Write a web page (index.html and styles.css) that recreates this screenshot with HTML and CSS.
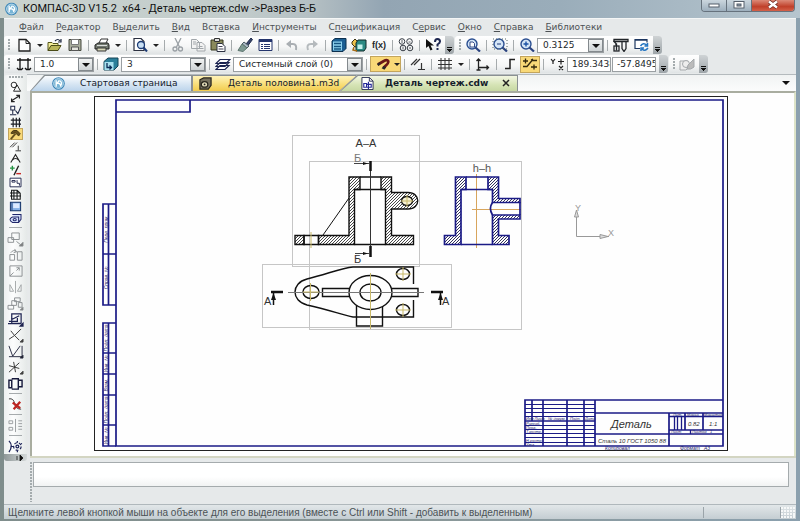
FILE: index.html
```html
<!DOCTYPE html>
<html lang="ru">
<head>
<meta charset="utf-8">
<title>КОМПАС-3D V15.2 x64 - Деталь чертеж.cdw</title>
<meta name="viewport" content="width=device-width, initial-scale=1">
<link rel="stylesheet" href="styles.css">
</head>
<body>
<div class="window">
  <header class="titlebar">
    <svg class="logo" viewBox="0 0 16 14" aria-hidden="true"><use href="#i-kompas"/></svg>
    <h1>КОМПАС-3D V15.2 &nbsp;x64 - Деталь чертеж.cdw -&gt;Разрез Б-Б</h1>
    <div class="caption">
      <button class="cap" aria-label="Свернуть"><svg viewBox="0 0 24 11"><rect x="7" y="4" width="10" height="3" fill="#fff" stroke="#555f6b"/></svg></button>
      <button class="cap" aria-label="Восстановить"><svg viewBox="0 0 24 11"><rect x="7" y="1.500" width="10" height="6.500" fill="#fff" stroke="#555f6b"/><rect x="10" y="4" width="4" height="2" fill="#8b99a8" stroke="#555f6b"/></svg></button>
      <button class="cap cap-close" aria-label="Закрыть"><svg viewBox="0 0 40 11"><path d="M16 1.500l8 6m0-6l-8 6" stroke="#6b2a22" stroke-width="4"/><path d="M16 1.500l8 6m0-6l-8 6" stroke="#fff" stroke-width="2.400"/></svg></button>
    </div>
  </header>

  <div class="frame">
    <nav class="menu" aria-label="Главное меню">
      <a href="#"><u>Ф</u>айл</a>
      <a href="#"><u>Р</u>едактор</a>
      <a href="#">В<u>ы</u>делить</a>
      <a href="#"><u>В</u>ид</a>
      <a href="#">Вст<u>а</u>вка</a>
      <a href="#"><u>И</u>нструменты</a>
      <a href="#">С<u>п</u>ецификация</a>
      <a href="#">С<u>е</u>рвис</a>
      <a href="#"><u>О</u>кно</a>
      <a href="#"><u>С</u>правка</a>
      <a href="#"><u>Б</u>иблиотеки</a>
    </nav>

    <div class="toolbars">
      <div class="toolbar">
        <i class="grip"></i>
        <button class="tool" aria-label="Создать"><svg viewBox="0 0 16 14"><path d="M3 1.500h7l4 4v7.500h-11z" fill="#fff" stroke="#222" stroke-width="1.300"/><path d="M10 1.500v4h4" fill="none" stroke="#222"/></svg></button>
        <button class="drop" aria-label="Варианты создания"></button>
        <button class="tool" aria-label="Открыть"><svg viewBox="0 0 16 14"><path d="M1 12.500v-8h4l1 1h5v2" fill="#f4ee9a" stroke="#55561a"/><path d="M1 12.500l3-5h10l-3 5z" fill="#b9b65a" stroke="#4a4b16"/><path d="M8 3q3-3 5 0m1-2v3h-3" fill="none" stroke="#1d2740" stroke-width="1.200"/></svg></button>
        <button class="tool" aria-label="Сохранить"><svg viewBox="0 0 16 14"><path d="M2 1.500h12v11h-12z" fill="#a9ad9c" stroke="#45493f"/><path d="M4.500 1.500h7v5h-7z" fill="#fff" stroke="#777"/><path d="M4.500 9h7v3.500h-7z" fill="#e5e5dd" stroke="#555"/></svg></button>
        <i class="sep"></i>
        <button class="tool" aria-label="Печать"><svg viewBox="0 0 16 14"><path d="M5 5l2-4h7l-2 4" fill="#fff" stroke="#333"/><path d="M1 7l3-2h10l1 2v4h-14z" fill="#737a70" stroke="#222"/><path d="M3 10h9v3h-9z" fill="#d8d8b8" stroke="#333"/><path d="M3 7.500h10" stroke="#ddd"/></svg></button>
        <button class="drop" aria-label="Параметры печати"></button>
        <i class="sep"></i>
        <button class="tool" aria-label="Предварительный просмотр"><svg viewBox="0 0 16 14"><path d="M2 .500h7l3 3v9h-10z" fill="#fff" stroke="#2b3040" stroke-width="1.200"/><circle cx="9" cy="7" r="3.500" fill="#c9e0f4" stroke="#1c3b75" stroke-width="1.300"/><path d="M11.500 9.500l3.500 4" stroke="#1c3b75" stroke-width="2"/></svg></button>
        <button class="drop" aria-label="Варианты просмотра"></button>
        <i class="sep"></i>
        <button class="tool" aria-label="Вырезать"><svg viewBox="0 0 16 14" fill="none" stroke="#9aa0a5" stroke-width="1.300"><path d="M5 0l4.500 9M11 0l-4.500 9"/><circle cx="5" cy="11" r="2"/><circle cx="10.500" cy="11" r="2"/></svg></button>
        <button class="tool" aria-label="Копировать"><svg viewBox="0 0 16 14" fill="#f2f2f2" stroke="#a1a6aa"><path d="M1.500 1.500h5l3 3v6h-8zM7 4.500h5l3 3v5.500h-8z"/><path d="M8.500 8.500h4m-4 2h5M3 4h3m-3 2h3"/></svg></button>
        <button class="tool" aria-label="Вставить"><svg viewBox="0 0 16 14"><path d="M1 2h12v10h-12z" fill="#8a8a5c" stroke="#35361f"/><path d="M4.500.500h5v3h-5z" fill="#ddd" stroke="#333"/><path d="M7 5.500h5l3 3v5h-8z" fill="#fff" stroke="#2b3040"/><path d="M8.500 8.500h4m-4 2.500h5" stroke="#445"/></svg></button>
        <i class="sep"></i>
        <button class="tool" aria-label="Копировать свойства"><svg viewBox="0 0 16 14"><path d="M9 6l5-6 1.500 1.500-4.500 6z" fill="#38456b" stroke="#202c4c"/><path d="M7 4l5 4-2 2-5-4z" fill="#a9b7c4" stroke="#4a5b62"/><path d="M5 6l5 4-4 3.500-5-1z" fill="#7e9a93" stroke="#5d766e"/></svg></button>
        <button class="tool" aria-label="Свойства"><svg viewBox="0 0 16 14"><path d="M2 1.500h13v11h-13z" fill="#fff" stroke="#24356d"/><path d="M2 1.500h13v2.500h-13z" fill="#24356d"/><path d="M4 6.500h2m1 0h6M4 8.500h2m1 0h6M4 10.500h2m1 0h6" stroke="#24356d" stroke-width="1.200"/></svg></button>
        <i class="sep"></i>
        <button class="tool" aria-label="Отменить"><svg viewBox="0 0 16 14"><path d="M3 6h6q4 0 3 6" fill="none" stroke="#aaafb3" stroke-width="2"/><path d="M7 2l-5 4 5 4z" fill="#aaafb3"/></svg></button>
        <button class="tool" aria-label="Повторить"><svg viewBox="0 0 16 14"><path d="M12 6h-5q-5 0-3 6" fill="none" stroke="#b5babd" stroke-width="2"/><path d="M9 2l5 4-5 4z" fill="#b5babd"/></svg></button>
        <i class="sep"></i>
        <button class="tool" aria-label="Менеджер документа"><svg viewBox="0 0 16 14"><path d="M1 3l3-2.500h11v10l-3 3h-11z" fill="#1b5e92" stroke="#0c304f"/><path d="M2 3.500h9v9h-9z" fill="#8fd2ee"/><path d="M3 5.500h7m-7 3h7m-7 2.500h7" stroke="#155480" stroke-width="1.300"/></svg></button>
        <button class="tool" aria-label="Библиотеки"><svg viewBox="0 0 16 14"><path d="M1 4l3-3 3 3v4l-3 1-3-3z" fill="#efc24a" stroke="#3d3413"/><path d="M5 5l2-3h8v8l-2 3h-8z" fill="#2c8a83" stroke="#102c2b"/><path d="M6.500 6.500h5v4.500h-5z" fill="#c6f0ea"/><path d="M3 9l-1 3 4 1" fill="none" stroke="#a86a12" stroke-width="1.500"/></svg></button>
        <button class="tool fx">f(x)</button>
        <i class="sep"></i>
        <button class="tool" aria-label="Параметры"><svg viewBox="0 0 16 14" fill="none" stroke="#353b43"><circle cx="4" cy="3.500" r="2.800"/><circle cx="11.500" cy="3.500" r="2.800"/><circle cx="5" cy="10" r="2.800"/><circle cx="12" cy="10" r="2.800"/><path d="M4 2v3m6.500-1h2M5 8.500v3m6-1.500h2" stroke-width=".800"/></svg></button>
        <i class="sep"></i>
        <button class="tool" aria-label="Справка"><svg viewBox="0 0 16 14"><path d="M1 1v9l2.500-2 2 4.500 2-1-2-4h3.500z" fill="#111"/><path d="M10 4q0-3 2.500-3t2.500 2.500q0 1.500-2.500 3v2" fill="none" stroke="#1e2750" stroke-width="2"/><path d="M11.500 10h2v2h-2z" fill="#1e2750"/></svg></button>
        <button class="more" aria-label="Ещё"></button>
      </div>
      <div class="toolbar">
        <i class="grip"></i>
        <button class="tool" aria-label="Показать всё"><svg viewBox="0 0 16 14"><use href="#i-lens"/><path d="M5 4h3l1.500 1.500v3.500h-4.500z" fill="#fff" stroke="#223a7a" stroke-width=".900"/></svg></button>
        <i class="sep"></i>
        <button class="tool" aria-label="Увеличить рамкой"><svg viewBox="0 0 16 14"><use href="#i-lens"/><path d="M1 1h14v10h-14z" fill="none" stroke="#566" stroke-dasharray="1 2"/><path d="M5 6h4" stroke="#223a7a"/></svg></button>
        <i class="sep"></i>
        <button class="tool" aria-label="Увеличить"><svg viewBox="0 0 16 14"><use href="#i-lens"/><path d="M4.500 6h5m-2.500-2.500v5" stroke="#1d52a5" stroke-width="1.400"/></svg></button>
        <span class="combo combo-scale"><select aria-label="Масштаб"><option>0.3125</option></select></span>
        <i class="sep"></i>
        <button class="tool" aria-label="Измерить"><svg viewBox="0 0 16 14" fill="none" stroke="#22262a" stroke-width="1.300"><path d="M1 3.500v-2h14v2h-14l2 2v2m10-4v7l-2 3-2-3v-7"/><rect x="1" y="8" width="5" height="5"/><path d="M3.500 5.500v7"/></svg></button>
        <button class="tool" aria-label="Обновить изображение"><svg viewBox="0 0 16 14"><path d="M7 10.500h-5v-9h12v3" fill="#fff" stroke="#1d3760" stroke-width="1.200"/><path d="M2 2h12" stroke="#1d3760" stroke-width="1.500"/><path d="M7.500 8q3-4 6-1m1-2v3h-3M15 10q-3 4-6 1m-1 2v-3h3" fill="none" stroke="#2475c2" stroke-width="1.500"/></svg></button>
        <button class="more" aria-label="Ещё"></button>
      </div>
    </div>

    <div class="toolbars">
      <div class="toolbar">
        <i class="grip"></i>
        <button class="tool" aria-label="Шаг курсора"><svg viewBox="0 0 16 14" fill="none" stroke="#111" stroke-width="1.300"><path d="M4 1v11m8-11v11M1 3h14M1 11l1.500 1.500h3L7 11M9 11l1.500 1.500h3L15 11"/></svg></button>
        <span class="combo combo-step"><select aria-label="Шаг курсора"><option>1.0</option></select></span>
        <i class="sep"></i>
        <button class="tool" aria-label="Состояния слоёв"><svg viewBox="0 0 16 14"><path d="M1 4.500l4-3.500h10v8l-4 4h-10z" fill="#2b7f9a" stroke="#154456"/><path d="M1.500 5h9v8h-9z" fill="#a8e0ee"/><path d="M4 6v4.500h4m-1.500-2l2 2-2 2" fill="none" stroke="#0c2a55" stroke-width="1.300"/></svg></button>
        <span class="combo combo-view"><select aria-label="Вид"><option>3</option></select></span>
        <i class="sep"></i>
        <button class="tool" aria-label="Слои"><svg viewBox="0 0 16 14" fill="#fff" stroke="#1b2350"><path d="M1 12.500l4-4h9l-4 4zM1 9.500l4-4h9l-4 4zM1 6.500l4-4h10l-4 4z" stroke-width="1.200"/></svg></button>
        <span class="combo combo-layer"><select aria-label="Слой"><option>Системный слой (0)</option></select></span>
        <i class="sep"></i>
        <button class="magnet" aria-label="Привязки"><svg viewBox="0 0 16 14"><path d="M2 7.500L8 4q4-2 5 0t-5 7" fill="none" stroke="#6b1717" stroke-width="3"/><path d="M1 7l3-2 1 2-2.500 2zM8 9l3 1.500-2 2.500-3-1.500z" fill="#28282b"/></svg><i class="tri"></i></button>
        <i class="sep"></i>
        <button class="tool" aria-label="Параллельность"><svg viewBox="0 0 16 14"><use href="#i-perp"/></svg></button>
        <i class="sep"></i>
        <button class="tool" aria-label="Сетка"><svg viewBox="0 0 16 14" fill="none" stroke="#333"><path d="M4 1v12M8 1v12M12 1v12M1 3.500h14M1 7.500h14M1 11h14"/></svg></button>
        <button class="drop" aria-label="Настройка сетки"></button>
        <i class="sep"></i>
        <button class="tool" aria-label="Локальная СК"><svg viewBox="0 0 16 14" fill="none" stroke="#222" stroke-width="1.300"><path d="M3.500 13v-11m-2 2l2-2 2 2M3.500 10.500h10m-2-2l2 2-2 2M1.500 13h4"/></svg></button>
        <i class="sep"></i>
        <button class="tool" aria-label="Ортогональное черчение"><svg viewBox="0 0 16 14" fill="none" stroke="#222" stroke-width="1.500"><path d="M3 11.500h5v-9h5"/></svg></button>
        <button class="tool active" aria-label="Округление"><svg viewBox="0 0 16 14" fill="none" stroke="#33290f" stroke-width="1.300"><path d="M1 4h5M3.500 1.500v5M1 9.500h4l5-6h5M9 10h6M12 7.500v5M9 3l2-1"/></svg></button>
        <i class="sep"></i>
        <button class="tool" aria-label="Координаты"><svg viewBox="0 0 16 14" fill="none" stroke="#222" stroke-width="1.200"><path d="M2 2l2 2.500 2-2.500M4 4.500v2.500M9 4.500h6M12 2v5.500M10 9l4 4m0-4l-4 4"/></svg></button>
        <input class="coord" aria-label="Координата X" value="189.3438">
        <input class="coord" aria-label="Координата Y" value="-57.8495">
        <button class="more" aria-label="Ещё"></button>
      </div>
      <div class="toolbar">
        <i class="grip"></i>
        <button class="tool" aria-label="Перестроить"><svg viewBox="0 0 16 14" fill="#eee" stroke="#a5a9ac"><path d="M1 4h8v7l-2 2h-6z"/><circle cx="7" cy="7" r="3.500"/><path d="M9 8l6-6v8q-3 3-7 2z" fill="#bbb"/></svg></button>
        <button class="more" aria-label="Ещё"></button>
      </div>
    </div>

    <main class="work">
      <aside class="rail" aria-label="Компактная панель">
        <i class="rail-grip"></i>
        <button class="mode" aria-label="Геометрия"><svg viewBox="0 0 16 14" fill="none" stroke="#222" stroke-width="1.200"><circle cx="6" cy="5" r="3.500"/><path d="M10 5l4.500 8h-9z"/></svg></button>
        <button class="mode" aria-label="Размеры"><svg viewBox="0 0 16 14" fill="none" stroke="#222" stroke-width="1.500"><path d="M3 10l9-6M3 7v4h4M9 3h4v4"/></svg></button>
        <button class="mode" aria-label="Обозначения"><svg viewBox="0 0 16 14" fill="none" stroke="#1c2545" stroke-width="1.300"><path d="M2 1.500h5v5h-5zM4.500 6.500v5M1 12.500h8M8 7l3 4 4-9"/></svg></button>
        <button class="mode" aria-label="Обозначения для строительства"><svg viewBox="0 0 16 14" fill="none" stroke="#1a1d25" stroke-width="1.500"><path d="M5 1v12M9 1v12M13 1v12M2 4h13M2 9h13"/></svg></button>
        <button class="mode active" aria-label="Редактирование"><svg viewBox="0 0 16 14"><path d="M2 5q3-5 8-3l4 4-2 3-4-4-5 1z" fill="#68511e" stroke="#372b0e"/><path d="M8 6l-6 7" stroke="#68511e" stroke-width="2.400"/></svg></button>
        <button class="mode" aria-label="Параметризация"><svg viewBox="0 0 16 14"><use href="#i-perp"/></svg></button>
        <button class="mode" aria-label="Измерения"><svg viewBox="0 0 16 14" fill="none" stroke="#222" stroke-width="1.400"><path d="M2 12l6-10 6 10M4 9q4-4 8 0"/></svg></button>
        <button class="mode" aria-label="Выделение"><svg viewBox="0 0 16 14" fill="none" stroke-width="1.800"><path d="M1 4h6M4 1v6" stroke="#259343"/><path d="M12 1l-6 12" stroke="#222"/><path d="M9 11h6" stroke="#c92b28"/></svg></button>
        <button class="mode" aria-label="Виды"><svg viewBox="0 0 16 14" fill="#fff" stroke="#20264e" stroke-width="1.200"><path d="M1 1.500h14v11h-14zM3.500 4.500h4v2h-4zM10 4v4h3v3"/></svg></button>
        <button class="mode" aria-label="Спецификация"><svg viewBox="0 0 16 14" fill="#fff" stroke="#181b1c" stroke-width="1.400"><path d="M3 1.500h7l4 4v7.500h-11zM6 2v11M10 2v11M1 5h13M1 9h14"/></svg></button>
        <button class="mode" aria-label="Отчёты"><svg viewBox="0 0 16 14"><path d="M1.500 1.500h13v11h-13z" fill="#86b2e8" stroke="#173468" stroke-width="1.300"/><path d="M5 3h8v6h-8z" fill="#dceaff"/><path d="M3.500 2v10" stroke="#173468"/></svg></button>
        <button class="mode" aria-label="Вставки"><svg viewBox="0 0 16 14" fill="#d6e1fa" stroke="#20276a" stroke-width="1.300"><path d="M4 2h11v6l-3 4h-8q-6-4 0-7h8v7"/><ellipse cx="7" cy="8.500" rx="2" ry="1.500"/></svg></button>
        <i class="rail-sep"></i>
        <button class="edit" aria-label="Сдвиг"><svg viewBox="0 0 18 16" fill="none" stroke="#8b8f91"><path d="M5 1h8v7h-8zM1 11h6v-5h-6zM10 10l5 4"/><path d="M17 11v4h-4z" fill="#777"/></svg></button>
        <button class="edit" aria-label="Поворот"><svg viewBox="0 0 18 16" fill="none" stroke="#8b8f91"><path d="M3 13v-6h5v6zM11 4h5v9h-5zM4 5q3-4 6-1M8 1l2 3-3 1"/></svg></button>
        <button class="edit" aria-label="Масштабирование"><svg viewBox="0 0 18 16" fill="none" stroke="#8b8f91"><path d="M3 2h13v11h-13zM3 13l4-4M10 7l3-3M10 4h3v3"/></svg></button>
        <button class="edit" aria-label="Симметрия"><svg viewBox="0 0 18 16" fill="none" stroke="#a3a7a9"><path d="M9 1v13M3 5v7h4zM15 5v7h-4z"/></svg></button>
        <button class="edit" aria-label="Копирование"><svg viewBox="0 0 18 16" fill="none" stroke="#8b8f91"><path d="M8 2h6v4h-6zM5 5h5v5h-5zM1 10h6v4h-6zM12 7h4v5h-4z"/><path d="M17 12v3h-3z" fill="#777"/></svg></button>
        <button class="edit" aria-label="Деформация"><svg viewBox="0 0 18 16" fill="none" stroke="#1e2352" stroke-width="1.300"><path d="M5 2h10v10h-10zM5 8l8-4M1 12.500h14M2 10h9v-5"/><path d="M17 12v3h-3z" fill="#222"/></svg></button>
        <button class="edit" aria-label="Усечь кривую"><svg viewBox="0 0 18 16" fill="none" stroke="#333"><path d="M2 12l6-4 7-7M8 8L4 3M8 8l5 5"/><path d="M17 12v3h-3z" fill="#555"/></svg></button>
        <button class="edit" aria-label="Удлинить"><svg viewBox="0 0 18 16" fill="none" stroke="#24283f"><path d="M2 2l4 11L14 2M2 13.500h14V2"/><path d="M17 12v3h-3z" fill="#222"/></svg></button>
        <button class="edit" aria-label="Разбить кривую"><svg viewBox="0 0 18 16" fill="none" stroke="#333"><path d="M2 13L13 3M2 6l11 3M7 2l2 11"/><path d="M17 12v3h-3z" fill="#555"/></svg></button>
        <button class="edit" aria-label="Очистить область"><svg viewBox="0 0 18 16" fill="none" stroke="#15183b" stroke-width="1.500"><path d="M2 4.500h3v8h-3zM5 3h7v11h-7M12 4.500h4v7h-4"/></svg></button>
        <i class="edit-sep"></i>
        <button class="edit" aria-label="Удалить"><svg viewBox="0 0 18 16" fill="none"><path d="M2 2q5-1 6 5t7 6" stroke="#333"/><path d="M6 6l8 6m0-7l-7 8" stroke="#bd2522" stroke-width="2.400"/></svg></button>
        <i class="edit-sep"></i>
        <button class="edit" aria-label="Выровнять"><svg viewBox="0 0 18 16" fill="none" stroke="#999d9f"><path d="M9 1v14M2 3h4v3h-4zM2 10h4v3h-4zM12 3h4M12 6h4M12 9h4M12 12h4"/></svg></button>
        <i class="edit-sep"></i>
        <button class="edit" aria-label="Преобразовать"><svg viewBox="0 0 18 16" fill="none" stroke="#1c2258" stroke-width="1.300"><path d="M2 2q5 5 0 12"/><circle cx="11" cy="8" r="4" stroke-dasharray="3 2"/><circle cx="11" cy="8" r="1.500"/><path d="M4 8h3M11 2v2M11 12v2M15 5l1 0"/></svg></button>
        <button class="rail-more" aria-label="Ещё"><svg viewBox="0 0 8 6"><path d="M1 1v4M4 0l3 3-3 3z" fill="#111" stroke="#111" stroke-width=".800"/></svg></button>
      </aside>

      <section class="document">
        <div class="tabs">
          <button class="tab tab-start"><svg viewBox="0 0 16 14"><use href="#i-kompas"/></svg><span>Стартовая страница</span></button>
          <button class="tab tab-model"><svg viewBox="0 0 16 14"><path d="M2 3l4-2h8v8l-3 4h-9z" fill="#77725f" stroke="#27251d" stroke-width="1.300"/><ellipse cx="7" cy="8" rx="3.500" ry="3" fill="#e5dfbb" stroke="#27251d" stroke-width="1.300"/><circle cx="7" cy="8" r="1" fill="#222"/></svg><span>Деталь половина1.m3d</span></button>
          <button class="tab tab-drawing"><svg viewBox="0 0 16 14"><path d="M2 .500h8l4 4v9h-12z" fill="#fff" stroke="#252a50"/><path d="M10 .500v4h4" fill="none" stroke="#252a50"/><path d="M4 7h3v4h-3zM7 8h5v3h-5M9 5v8" fill="none" stroke="#252a9a" stroke-width="1.200"/></svg><span>Деталь чертеж.cdw</span><svg class="tab-x" viewBox="0 0 8 8"><path d="M1 1l6 6m0-6L1 7" stroke="#222" stroke-width="1.500"/></svg></button>
          <button class="tab-list" aria-label="Список вкладок"></button>
        </div>

        <div class="canvas">
          <svg class="drawing" viewBox="32 93 762 363" preserveAspectRatio="xMinYMin meet" role="img" aria-label="Чертёж детали">
            <defs>
              <pattern id="hatch" width="3" height="3" patternUnits="userSpaceOnUse"><path d="M-1 1l2-2M0 3l3-3M2 4l2-2" stroke="#333" stroke-width=".900"/></pattern>
              <pattern id="hatch-blue" width="3" height="3" patternUnits="userSpaceOnUse"><path d="M-1 1l2-2M0 3l3-3M2 4l2-2" stroke="#33335c" stroke-width="1"/></pattern>
            </defs>

            <rect x="94.500" y="96.500" width="633" height="354" class="thin"/>
            <g class="blue bold">
              <path d="M116 100H723V446H116z"/>
              <path d="M116 112H190V100"/>
              <path d="M116 204H103V305H116M103 254H116M108.500 204V305"/>
              <path d="M116 323H103V446H116M103 353H116M103 374H116M103 395H116M103 425H116M108.500 323V446"/>
            </g>
            <g class="stamp" font-size="5" text-anchor="middle">
              <text transform="translate(108 229) rotate(-90)">Перв. прим.</text>
              <text transform="translate(108 278) rotate(-90)">Справ. №</text>
              <text transform="translate(108 338) rotate(-90)">Подп. дата</text>
              <text transform="translate(108 364) rotate(-90)">Инв. №</text>
              <text transform="translate(108 385) rotate(-90)">Взам.</text>
              <text transform="translate(108 410) rotate(-90)">Подп. дата</text>
              <text transform="translate(108 436) rotate(-90)">Инв. №</text>
            </g>

            <g class="blue">
              <path class="bold" d="M525 446V400H723M543 400V446M567 400V446M584 400V446M595 400V446M532 400V421"/>
              <path d="M525 404.500H595M525 408.500H595M525 412.500H595M525 416.500H595M525 425.500H595M525 429.500H595M525 433.500H595M525 437.500H595M525 442.500H595" stroke-width="1"/>
              <path class="bold" d="M525 421H595M595 413H723M595 434H723M669 413V446M669 430H723M685 413V430M703 413V430"/>
              <path d="M669 416.500H723M674.500 417V430M677.500 417V430M681.500 417V430M690.500 430V434" stroke-width="1.300"/>
            </g>
            <g class="stamp" font-size="4">
              <text x="526" y="420">Изм Лист</text><text x="548" y="420">№ докум.</text><text x="570" y="420">Подп.</text><text x="585" y="420">Дата</text>
              <text x="526" y="425">Разраб.</text><text x="526" y="429">Пров.</text><text x="526" y="433">Т.контр.</text><text x="526" y="442">Н.контр.</text><text x="526" y="446">Утв.</text>
              <text x="673" y="416">Лит.</text><text x="687" y="416">Масса</text><text x="704" y="416">Масштаб</text>
              <text x="671" y="433">Лист</text><text x="692" y="433">Листов &#160; 1</text>
              <text x="605" y="450" font-size="5">Копировал</text><text x="680" y="450" font-size="5">Формат &#160; А3</text>
            </g>
            <g class="gost">
              <text x="611" y="428" font-size="11">Деталь</text>
              <text x="598" y="443" font-size="6">Сталь 10 ГОСТ 1050 88</text>
              <text x="688" y="426" font-size="6">0.82</text>
              <text x="709" y="426" font-size="6">1:1</text>
            </g>

            <g fill="none" stroke="#c6c6c6">
              <rect x="292.500" y="135.500" width="127" height="131"/>
              <rect x="309.500" y="161.500" width="212" height="168"/>
              <rect x="262.500" y="264.500" width="189" height="63"/>
            </g>

            <g class="black">
              <path fill="url(#hatch)" d="M349 177H360V189.500H354.500V244.500H318.500V235.500H349z"/>
              <path fill="url(#hatch)" d="M295 235.500H304V244.500H295z"/>
              <path d="M304 235.500H318.500V244.500H304z"/>
              <path fill="url(#hatch)" d="M381 177H391.500V192.500H408C421 192.500 421 209 408 209H391.500V235.500H413.500V244.500H385.500V189.500H381z"/>
              <path d="M360 177H381M354.500 189.500H385.500M354.500 244.500H385.500"/>
              <path d="M323 235L349 198" stroke-width="1"/>
              <ellipse cx="407" cy="201" rx="5.500" ry="4.500" fill="#f6f1d5"/>
            </g>
            <path d="M370.500 162V257" stroke="#333"/>
            <path d="M370.500 161V171M370.500 246V257" stroke="#111" stroke-width="2.500"/>
            <path d="M354 163.500H370M355 253.500H370" stroke="#444"/>
            <path d="M363 162l5 1.500-5 1.500zM363 252l5 1.500-5 1.500z" fill="#111"/>
            <g class="label">
              <text x="366" y="147" font-size="11" text-anchor="middle">А–А</text>
              <text x="354" y="162" font-size="11" fill="#777">Б</text>
              <text x="354" y="263" font-size="11">Б</text>
              <text x="264" y="305" font-size="11">А</text>
              <text x="442" y="305" font-size="11">А</text>
              <text x="482" y="172" font-size="11" text-anchor="middle" fill="#555">h–h</text>
            </g>

            <g class="black">
              <path d="M413.500 284V267H353C342 268 330 273 307 279C291 283 291 301 307 305C330 310 342 315 353 317H413.500V300"/>
              <path d="M356.500 305V326H382.500V305"/>
              <path fill="#fefefe" d="M322.500 288.500H351V296.500H322.500zM390 288.500H418V296.500H390z"/>
              <ellipse cx="370.500" cy="292.500" rx="21.500" ry="17" fill="#fefefe"/>
              <ellipse cx="370.500" cy="292.500" rx="10.500" ry="8.500"/>
              <ellipse cx="311" cy="292" rx="8" ry="6.500"/>
              <ellipse cx="403" cy="274" rx="6.500" ry="5.500"/>
              <ellipse cx="403" cy="310" rx="6.500" ry="5.500"/>
            </g>
            <path d="M288 292.500H424" stroke="#777"/>
            <g class="axis">
              <path d="M311 232V248M310.500 283V301M370.500 273V329M403 267V281M395 274H411M403 303V317M395 310H411M401 201H413M407 195V207M303 292H319"/>
              <path d="M476.500 174V248M472 209.500H521" stroke="#d8a55c"/>
            </g>
            <path d="M271 292H283M431 292H443" stroke="#111" stroke-width="2.500"/>
            <path d="M273.500 293V305M440.500 293V305" stroke="#111" stroke-width="1.500"/>
            <path d="M271 300l2.500-7 2.500 7zM438 300l2.500-7 2.500 7z" fill="#111"/>

            <g class="blue bold">
              <path fill="url(#hatch-blue)" d="M455.500 177H466V189.500H461V244.500H444.500V235.500H455.500z"/>
              <path fill="url(#hatch-blue)" d="M488 177H498.500V198.500H520V202.500H492.500V189.500H488z"/>
              <path fill="url(#hatch-blue)" d="M492.500 215H520V219H498.500V235.500H509V244.500H492.500z"/>
              <path d="M466 177H488M461 189.500H492.500M461 244.500H492.500M520 202V215M492.500 202.500C490 206 490 211 492.500 215"/>
            </g>

            <g fill="none" stroke="#999">
              <path d="M576.500 210V236.500H609"/>
              <path d="M574.500 217l2-7 2 7zM600 234.500l8 2-8 2z" fill="#ddd"/>
            </g>
            <g class="label axes" font-size="9"><text x="575" y="211">Y</text><text x="608" y="236">X</text></g>
          </svg>
        </div>
      </section>
    </main>

    <section class="props" aria-label="Панель свойств"><i class="props-grip"></i><div class="props-field"></div></section>
    <footer class="status"><p>Щелкните левой кнопкой мыши на объекте для его выделения (вместе с Ctrl или Shift - добавить к выделенным)</p><span class="status-cell"></span><span class="status-end"></span></footer>
  </div>
</div>

<svg class="sprite" aria-hidden="true">
  <symbol id="i-kompas" viewBox="0 0 16 14"><circle cx="8" cy="7" r="6.800" fill="#3a86b8"/><circle cx="8" cy="7" r="5.300" fill="#78b5d6" stroke="#e8f4fa" stroke-width=".700"/><path d="M5.500 3.500v7M6 7.500l3-4M6.500 6.500q4 0 4 4M9.500 4q3 2 1 5" fill="none" stroke="#fff" stroke-width="1.400"/></symbol>
  <symbol id="i-lens" viewBox="0 0 16 14"><circle cx="7" cy="6" r="5" fill="#d5e6f7" stroke="#2b4f91" stroke-width="1.400"/><path d="M10.500 9.500l4.500 4" stroke="#2b4380" stroke-width="2.200"/></symbol>
  <symbol id="i-perp" viewBox="0 0 16 14"><path d="M1 8l6-6M4 8l6-6M11.500 6v6M8 12.500h7" fill="none" stroke="#333" stroke-width="1.200"/></symbol>
</svg>
</body>
</html>
```
FILE: styles.css
```css
* { box-sizing: border-box; }

body {
  margin: 0;
  font-family: "DejaVu Sans", sans-serif;
  font-size: 9px;
  color: #23282b;
}

button, input, select { font: inherit; color: inherit; margin: 0; padding: 0; }
button { border: 0; background: none; }
.sprite { position: absolute; width: 0; height: 0; }

.window {
  display: flex;
  flex-direction: column;
  height: 100vh;
  min-height: 500px;
  padding: 0 4px 2px;
  background: linear-gradient(90deg, #7f8d8c 0, #8a9797 50%, #8ba0ae 100%);
}

/* title bar */
.titlebar {
  display: flex;
  align-items: center;
  height: 18px;
  margin: 0 -4px;
  padding: 0 5px 0 4px;
  background: linear-gradient(90deg, #cad3cf 0, #c2cccb 30%, #b4bfc3 39%, #93a5b3 48%, #9aadba 70%, #b6c5ce 100%);
}
.logo { width: 15px; height: 14px; }
.titlebar h1 {
  flex: 1;
  margin: 0 0 0 4px;
  font: 400 11px/16px Roboto, sans-serif;
  color: #111;
  white-space: nowrap;
}
.caption { display: flex; align-self: flex-start; border: 1px solid #66727d; border-top: 0; border-radius: 0 0 4px 4px; overflow: hidden; }
.cap { width: 25px; height: 11px; border-right: 1px solid #66727d; background: linear-gradient(#cbd6de, #9dafbd); }
.cap svg { display: block; width: 100%; height: 11px; }
.cap-close { width: 42px; border: 0; background: linear-gradient(#dc8a78, #c0402a 60%, #d4614a); }

.frame {
  flex: 1;
  min-height: 0;
  display: flex;
  flex-direction: column;
  background: #e6e9ea;
  border-top: 1px solid #f4f6f6;
}

/* menu */
.menu { display: flex; align-items: center; gap: 12px; height: 17px; padding-left: 15px; line-height: 17px; }
.menu a { color: #4c5154; text-decoration: none; }

/* toolbars */
.toolbars { display: flex; gap: 1px; height: 19px; }
.toolbar {
  display: flex;
  align-items: center;
  height: 18px;
  background: linear-gradient(#fff, #f5f6f6 60%, #dfe3e4);
  border-radius: 3px;
}
.grip { width: 10px; height: 12px; background: radial-gradient(circle at 1px 1px, #a4abad 1px, transparent 1px) 4px 0 / 6px 3px repeat-y; }
.toolbar + .toolbar .grip { width: 8px; }
.sep { width: 7px; height: 11px; background: linear-gradient(#a6abad, #a6abad) center / 1px 100% no-repeat; }
.tool { display: grid; place-items: center; width: 20px; height: 17px; }
.tool svg, .magnet svg { width: 16px; height: 14px; }
.active, .magnet { background: #f9d978; border: 1px solid #c3a55c; }
.magnet { display: flex; align-items: center; gap: 3px; width: 31px; height: 16px; padding-left: 5px; }
.drop { display: grid; place-items: center; width: 11px; height: 16px; }
.drop::before, .tri { content: ""; border: 3px solid transparent; border-top-color: #222; border-bottom: 0; }
.fx { font: 700 9px "Liberation Sans", sans-serif; }
.more {
  display: grid;
  place-items: end center;
  align-self: stretch;
  width: 9px;
  margin-left: 2px;
  padding-bottom: 2px;
  border-radius: 0 3px 3px 0;
  background: linear-gradient(#cfd3d5, #9da4a8);
}
.more::before { content: ""; width: 5px; height: 5px; background: linear-gradient(#111, #111) top / 5px 1px no-repeat, linear-gradient(#111, #111) 0 2px / 5px 1px no-repeat, linear-gradient(#111, #111) 1px 3px / 3px 1px no-repeat, linear-gradient(#111, #111) 2px 4px / 1px 1px no-repeat; }

.combo { position: relative; display: flex; height: 15px; }
.combo select {
  appearance: none;
  width: 100%;
  padding: 0 16px 0 5px;
  border: 1px solid #9a9fa2;
  border-radius: 0;
  background: #fff;
}
.combo::before { content: ""; position: absolute; top: 1px; right: 1px; bottom: 1px; width: 13px; border: 1px solid #83898d; background: linear-gradient(#f1f3f3, #ced3d5); pointer-events: none; }
.combo::after { content: ""; position: absolute; top: 6px; right: 4px; border: 4px solid transparent; border-top-color: #111; border-bottom: 0; pointer-events: none; }
.combo-scale { width: 67px; }
.combo-step { width: 60px; }
.combo-view { width: 85px; }
.combo-layer { width: 130px; }
.coord { width: 44px; height: 15px; margin-right: 1px; padding: 0 0 0 4px; border: 1px solid #9a9fa2; background: #fff; }

/* work area */
.work { flex: 1; min-height: 0; display: flex; }
.rail {
  display: flex;
  flex-direction: column;
  align-items: center;
  width: 23px;
  margin-top: 1px;
  background: linear-gradient(90deg, #edf0f0, #fcfdfd 40%, #e5e9e8);
  border-radius: 3px;
}
.rail-grip { width: 14px; height: 5px; background: radial-gradient(circle at 1px 1px, #a4abad 1px, transparent 1px) 0 1px / 3px 5px repeat-x; }
.mode { width: 15px; height: 12px; }
.mode, .edit, .rail-more { display: grid; place-items: center; flex: none; }
.mode svg { width: 13px; height: 11px; }
.edit { width: 20px; height: 16px; }
.edit svg { width: 17px; height: 15px; }
.rail-sep, .edit-sep { flex: none; width: 13px; height: 7px; background: linear-gradient(#a6abad, #a6abad) center / 100% 1px no-repeat; }
.edit-sep { height: 5px; }
.rail-more { width: 100%; flex: 1; padding-left: 8px; background: linear-gradient(90deg, #8f9798, #d5dada); border-radius: 0 0 3px 3px; }
.rail-more svg { width: 8px; height: 6px; }

.document { flex: 1; min-width: 0; display: flex; flex-direction: column; }
.tabs { display: flex; height: 17px; padding-left: 3px; background: linear-gradient(#f1f3f3, #fbfcfc); border-top: 1px solid #b4babd; }
.tab { position: relative; isolation: isolate; display: flex; align-items: center; height: 16px; color: #14202c; background: #8a9093; white-space: nowrap; }
.tab::before { content: ""; position: absolute; z-index: -1; inset: 1px 1px 0; }
.tab svg { flex: none; width: 15px; height: 13px; }
.tab-start, .tab-start::before { clip-path: polygon(14px 0, 100% 0, 100% 100%, 0 100%); }
.tab-start { width: 162px; padding-left: 21px; gap: 14px; }
.tab-start::before { background: linear-gradient(#fafcfe, #d3e3f2 60%, #bcd4ec); }
.tab-model, .tab-model::before { clip-path: polygon(0 0, 100% 0, calc(100% - 17px) 100%, 0 100%); }
.tab-model { width: 165px; padding-left: 6px; gap: 15px; }
.tab-model::before { background: linear-gradient(#fff3b8, #f7dc74 60%, #f2cc4e); }
.tab-drawing, .tab-drawing::before { clip-path: polygon(17px 0, 100% 0, 100% 100%, 0 100%); }
.tab-drawing { width: 178px; margin-left: -17px; padding-left: 20px; gap: 10px; font-weight: 700; }
.tab-drawing::before { background: linear-gradient(#f2f6e2, #d5e3b4 60%, #c7d8a3); }
.tab .tab-x { width: 8px; height: 8px; margin-left: 4px; }
.tab-list { margin-left: auto; width: 20px; display: grid; place-items: center; }
.tab-list::before { content: ""; border: 4px solid transparent; border-top-color: #111; border-bottom: 0; }

.canvas {
  flex: 1;
  min-height: 0;
  margin: 0 0 5px 3px;
  border: 1px solid #a9ada0;
  border-width: 2px 2px 0;
  border-right-color: #dde3c8;
  background: #fefefe;
  box-shadow: 0 2px 0 #d3d5c2;
}
.drawing { display: block; width: 100%; height: 100%; }
.thin { fill: none; stroke: #222; }
.blue { fill: none; stroke: #1b1b86; }
.bold { stroke-width: 1.7; }
.black { fill: none; stroke: #111; stroke-width: 1.4; }
.axis { fill: none; stroke: #c9b969; }
.label { font-family: "Liberation Sans", sans-serif; fill: #333; }
.axes { fill: #999; }
.stamp { font-family: "Liberation Sans", sans-serif; font-style: italic; fill: #25256b; }
.gost { font-family: "Liberation Sans", sans-serif; font-style: italic; fill: #333; }

/* bottom panels */
.props { display: flex; height: 43px; padding: 1px 7px 17px 26px; }
.props-grip { width: 3px; height: 40px; background: radial-gradient(circle at 1px 1px, #a4abad 1px, transparent 1px) 0 0 / 3px 3px repeat-y; }
.props-field { flex: 1; border: 1px solid #a5abad; background: linear-gradient(#fff 60%, #f1f3f3); }
.status { display: flex; align-items: center; height: 15px; border-top: 1px solid #b0b8bc; background: linear-gradient(#e2e7e9, #c4cdd2); color: #4b5256; }
.status p { flex: 1; min-width: 0; margin: 0; padding-left: 4px; overflow: hidden; white-space: nowrap; font: 10px/13px "Liberation Sans", sans-serif; }
.status-cell { width: 78px; height: 11px; border: 1px solid #9ba4a9; border-width: 0 1px; }
.status-end { width: 15px; height: 11px; background: radial-gradient(circle at 1px 1px, #f6f8f8 1px, transparent 1px) right bottom / 3px 3px no-repeat, radial-gradient(circle at 1px 1px, #f6f8f8 1px, transparent 1px) 6px 6px / 3px 3px; }
```
